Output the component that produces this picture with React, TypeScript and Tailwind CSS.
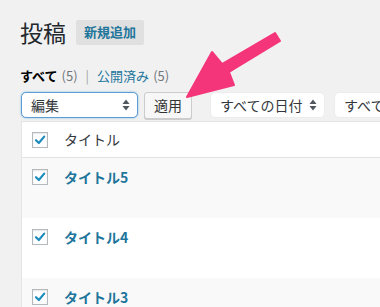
import React from "react";

const Arrows = () => (
  <svg width="8" height="12" viewBox="0 0 8 12" className="shrink-0">
    <polygon points="4,0.5 7.5,5 0.5,5" fill="#50575e" />
    <polygon points="0.5,7 7.5,7 4,11.5" fill="#50575e" />
  </svg>
);

const Check = () => (
  <div className="w-[16px] h-[16px] border border-[#b4b9be] bg-white shadow-[inset_0_1px_2px_rgba(0,0,0,0.1)] flex items-center justify-center shrink-0">
    <svg width="12" height="12" viewBox="0 0 12 12">
      <path d="M2 6.2 L4.8 9 L10.2 2.6" fill="none" stroke="#1e8cbe" strokeWidth="2.2" strokeLinecap="round" strokeLinejoin="round" />
    </svg>
  </div>
);

const Row = ({ title, bg }: { title: string; bg: string }) => (
  <div className={`h-[60px] flex items-start pt-[11px] pl-[10px] ${bg}`}>
    <Check />
    <span className="ml-[16px] text-[14px] leading-[16px] font-bold text-[#21759b] whitespace-nowrap">{title}</span>
  </div>
);

export default function App() {
  return (
    <div
      className="relative w-[380px] h-[307px] overflow-hidden bg-[#f1f1f1] text-[#32373c]"
      style={{ fontFamily: '"Noto Sans CJK JP", "Noto Sans", sans-serif' }}
    >
      <div className="pl-[20px] pt-[17px] w-[600px]">
        <div className="h-[30px] flex items-center">
          <h1 className="text-[23px] leading-[29px] text-[#23282d] font-normal">投稿</h1>
          <span className="ml-[10px] h-[25px] px-[8px] flex items-center bg-[#e0e0e0] text-[#21759b] text-[13px] font-semibold rounded-[2px] whitespace-nowrap">
            新規追加
          </span>
        </div>
        <div className="mt-[19px] h-[20px] flex items-center text-[13px] leading-[20px] whitespace-nowrap">
          <span className="font-bold text-black">すべて</span>
          <span className="ml-[4px] text-[#72777c]">(5)</span>
          <span className="mx-[8px] text-[#a0a5aa]">|</span>
          <span className="text-[#21759b]">公開済み</span>
          <span className="ml-[4px] text-[#72777c]">(5)</span>
        </div>
        <div className="mt-[6px] h-[27px] flex items-start whitespace-nowrap">
          <div className="ml-[1px] w-[117px] h-[26px] shrink-0 bg-white border border-[#5b9dd9] rounded-[5px] shadow-[0_0_2px_rgba(30,140,190,0.6)] flex items-center justify-between pl-[9px] pr-[7px] text-[14px]">
            <span>編集</span>
            <Arrows />
          </div>
          <div className="ml-[6px] w-[48px] h-[27px] shrink-0 bg-[#f7f7f7] border border-[#cccccc] rounded-[3px] shadow-[0_1px_0_#cccccc] flex items-center justify-center text-[14px] text-[#333]">
            適用
          </div>
          <div className="ml-[18px] w-[115px] h-[26px] shrink-0 bg-white border border-[#ececec] rounded-[5px] flex items-center justify-between pl-[9px] pr-[7px] text-[14px]">
            <span>すべての日付</span>
            <Arrows />
          </div>
          <div className="ml-[9px] w-[160px] h-[26px] shrink-0 bg-white border border-[#ececec] rounded-[5px] flex items-center pl-[9px] text-[14px]">
            <span>すべてのカテゴリー</span>
          </div>
        </div>
        <div className="mt-[2px] ml-[1px] w-[400px] bg-white border-l border-t border-[#e5e5e5]">
          <div className="h-[36px] flex items-center pl-[10px] border-b border-[#e1e1e1]">
            <Check />
            <span className="ml-[16px] text-[14px] whitespace-nowrap">タイトル</span>
          </div>
          <Row title="タイトル5" bg="bg-[#f9f9f9]" />
          <Row title="タイトル4" bg="bg-white" />
          <Row title="タイトル3" bg="bg-[#f9f9f9]" />
        </div>
      </div>
      <svg className="absolute left-0 top-0 pointer-events-none" width="380" height="307" viewBox="0 0 380 307">
        <polygon
          points="187,97 212,52 222,64 275,33 280,41 229,72 234,85"
          fill="#f5357a"
          stroke="#f5357a"
          strokeWidth="2"
          strokeLinejoin="round"
        />
      </svg>
    </div>
  );
}
